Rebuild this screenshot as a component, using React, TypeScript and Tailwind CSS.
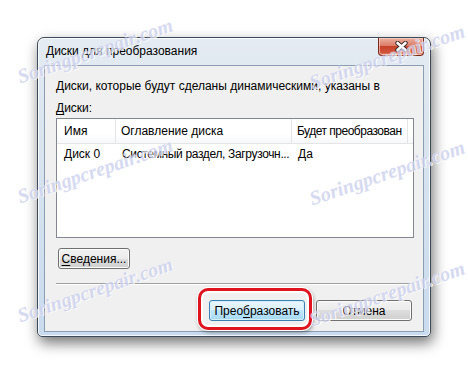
import React from "react";

const ui = { fontFamily: '"Liberation Sans", Arial, sans-serif' };

const marks = [
  { left: 18, top: 62 },
  { left: 310, top: 68 },
  { left: 18, top: 182 },
  { left: 310, top: 184 },
  { left: 18, top: 301 },
  { left: 310, top: 305 },
];

const CloseIcon = () => (
  <svg width="15" height="11" viewBox="0 0 15 11">
    <path d="M3.5 2 L11.5 9 M11.5 2 L3.5 9" stroke="#3b2a28" strokeWidth="4.4" strokeLinecap="round" />
    <path d="M3.5 2 L11.5 9 M11.5 2 L3.5 9" stroke="#ffffff" strokeWidth="2.6" strokeLinecap="round" />
  </svg>
);

const Button: React.FC<{ primary?: boolean; className?: string; children: React.ReactNode }> = ({
  primary,
  className,
  children,
}) => (
  <div
    className={`flex items-center justify-center h-[21px] rounded-[3px] border text-[12px] text-black ${
      primary
        ? "border-[#3c7fb1] bg-[linear-gradient(#eaf6fd,#d9f0fc_50%,#bee6fd_50%,#a7d9f5)] shadow-[inset_0_0_0_1px_#d4f0ff]"
        : "border-[#707070] bg-[linear-gradient(#f2f2f2,#ebebeb_50%,#dddddd_50%,#cfcfcf)] shadow-[inset_0_0_0_1px_#fcfcfc]"
    } ${className ?? ""}`}
  >
    {children}
  </div>
);

export default function App() {
  return (
    <div className="relative w-[468px] h-[375px] overflow-hidden bg-white pl-[37px] pt-[37px]" style={ui}>
      {/* window */}
      <div className="flex flex-col w-[394px] h-[300px] rounded-t-[7px] rounded-b-[5px] border border-[#3d4a58] bg-[linear-gradient(#e4ebf2,#dbe5ef_30%,#c9dbee)] shadow-[2px_6px_14px_rgba(0,0,0,0.55),inset_0_0_0_1px_rgba(255,255,255,0.8)]">
        <div className="flex items-start justify-between h-[27px]">
          <span className="pl-[8px] pt-[6px] text-[12px] leading-[15px] text-black">Диски для преобразования</span>
          <div className="flex items-center justify-center mr-[6px] w-[46px] h-[18px] rounded-b-[4px] border border-t-0 border-[#7a2a1c] bg-[linear-gradient(#eab0a2,#dc7d66_45%,#c7432b_50%,#d0543a_85%,#e6876c)] shadow-[inset_0_0_0_1px_rgba(255,220,210,0.6)]">
            <CloseIcon />
          </div>
        </div>

        {/* client area */}
        <div className="flex flex-col mx-[6px] mb-[4px] flex-1 border border-[#8a9db2] bg-[#f0f0f0] pl-[11px] pr-[9px]">
          <div className="mt-[13px] text-[12px] leading-[15px] text-black whitespace-nowrap">
            Диски, которые будут сделаны динамическими, указаны в
          </div>
          <div className="mt-[7px] text-[12px] leading-[15px] text-black">
            <span className="underline underline-offset-2">Д</span>иски:
          </div>

          <div className="mt-[2px] h-[120px] border border-[#828790] bg-white text-[12px] text-black">
            <div className="flex h-[25px] border-b border-[#e5e5e5] bg-[linear-gradient(#ffffff,#ffffff_60%,#f7f8fa)]">
              <div className="flex items-center w-[59px] pl-[7px] border-r border-[#e5e5e5]">Имя</div>
              <div className="flex items-center w-[176px] pl-[5px] border-r border-[#e5e5e5]">Оглавление диска</div>
              <div className="flex items-center w-[116px] pl-[5px] border-r border-[#e5e5e5] whitespace-nowrap overflow-hidden tracking-[-0.5px]">
                Будет преобразован
              </div>
              <div className="flex-1" />
            </div>
            <div className="flex h-[20px] items-center">
              <div className="w-[59px] pl-[7px]">Диск 0</div>
              <div className="w-[176px] pl-[6px] whitespace-nowrap overflow-hidden tracking-[-0.35px]">
                Системный раздел, Загрузочн...
              </div>
              <div className="pl-[6px]">Да</div>
            </div>
          </div>

          <Button className="mt-[10px] ml-[2px] w-[72px]">
            <span>
              <span className="underline underline-offset-2">С</span>ведения...
            </span>
          </Button>

          <div className="mt-[14px] mr-[4px] h-[2px] border-t border-[#a0a0a0] border-b border-b-white" />

          <div className="flex justify-end gap-[11px] mt-[15px] pr-[2px]">
            <Button primary className="w-[96px]">
              <span>
                Прео<span className="underline underline-offset-2">б</span>разовать
              </span>
            </Button>
            <Button className="w-[96px]">Отмена</Button>
          </div>
        </div>
      </div>

      {/* red highlight */}
      <div className="absolute left-[198px] top-[288px] w-[114px] h-[42px] rounded-[10px] border-[3px] border-[#e0141e] shadow-[0_0_0_1px_#ffffff,inset_0_0_0_2px_#ffffff,1px_2px_4px_rgba(0,0,0,0.45)]" />

      {/* watermarks */}
      {marks.map((m, i) => (
        <div
          key={i}
          className="absolute origin-left -rotate-[19deg] text-[20px] font-bold italic text-[#cdd2ee] opacity-80 whitespace-nowrap [text-shadow:0_0_1px_#ffffff,1px_1px_0_#ffffff] pointer-events-none"
          style={{ left: m.left, top: m.top, fontFamily: '"Liberation Serif", serif' }}
        >
          Soringpcrepair.com
        </div>
      ))}
    </div>
  );
}
